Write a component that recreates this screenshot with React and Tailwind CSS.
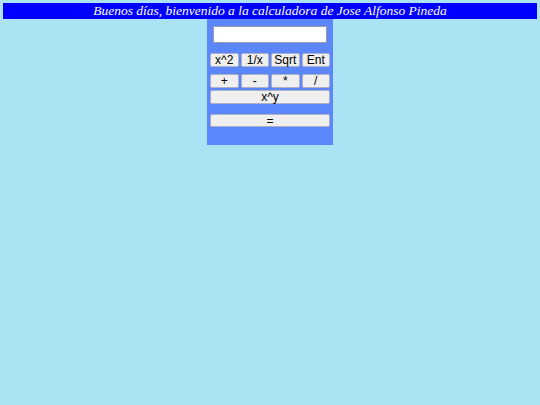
export default function App() {
  const btn =
    "h-full w-full bg-[#efefef] border border-[#aeb0c4] rounded-[2px] text-[12px] leading-none text-black flex items-center justify-center";
  const font = { fontFamily: '"Liberation Sans", Arial, sans-serif' };
  return (
    <div className="min-h-screen w-full bg-[#abe3f5] pt-[3px]" style={font}>
      <div
        className="mx-[3px] h-[16px] bg-[#0000ff] text-white italic text-[13.5px] leading-[16px] text-center"
        style={{ fontFamily: '"Liberation Serif", "Times New Roman", serif' }}
      >
        Buenos días, bienvenido a la calculadora de Jose Alfonso Pineda
      </div>
      <div className="mx-auto w-[126px] bg-[#5c86fc] px-[3px] pt-[7px] pb-[18px] flex flex-col">
        <div className="mx-[3px] h-[17px] w-[114px] bg-white border border-[#9a9aaa]" />
        <div className="mt-[10px] h-[13px] grid grid-cols-4 gap-[2px]">
          <div className={btn}>x^2</div>
          <div className={btn}>1/x</div>
          <div className={btn}>Sqrt</div>
          <div className={btn}>Ent</div>
        </div>
        <div className="mt-[8px] h-[13px] grid grid-cols-4 gap-[2px]">
          <div className={btn}>+</div>
          <div className={btn}>-</div>
          <div className={btn}>*</div>
          <div className={btn}>/</div>
        </div>
        <div className="mt-[3px] h-[14px]">
          <div className={btn}>x^y</div>
        </div>
        <div className="mt-[10px] h-[13px]">
          <div className={btn}>=</div>
        </div>
      </div>
    </div>
  );
}
